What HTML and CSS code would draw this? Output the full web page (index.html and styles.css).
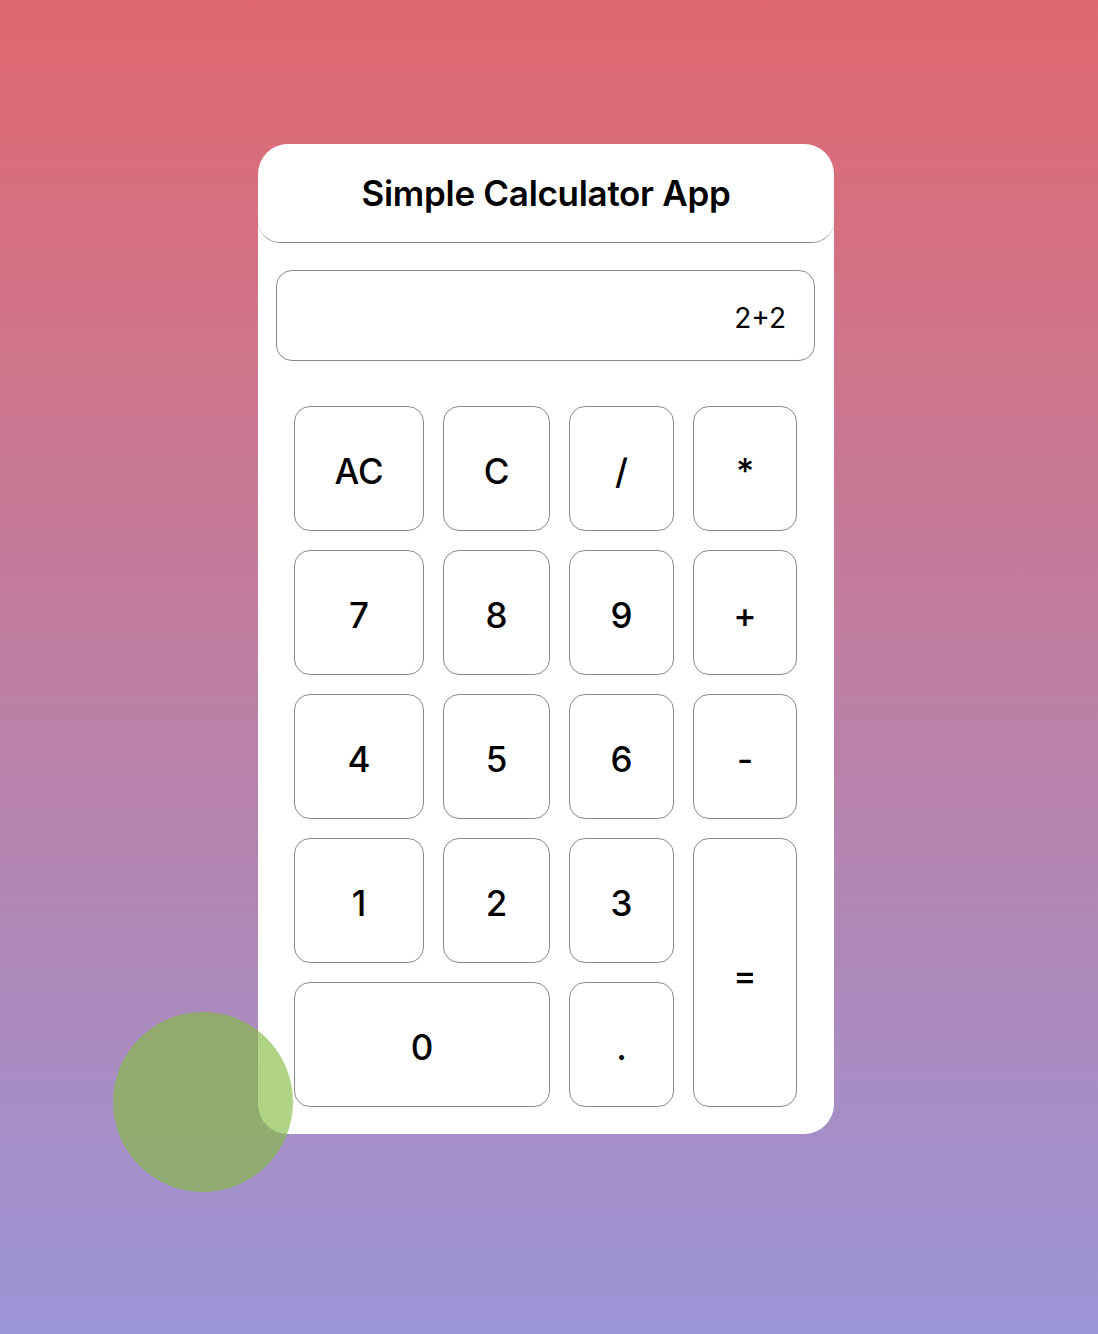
FILE: index.html
```html
<!DOCTYPE html>
<html lang="en">
<head>
<meta charset="utf-8">
<title>Simple Calculator App</title>
<link rel="stylesheet" href="styles.css">
</head>
<body>
<div class="page">
  <div class="calculator">
    <header class="calc-header">
      <h1 class="calc-title">Simple Calculator App</h1>
    </header>
    <div class="display">2+2</div>
    <div class="keys">
      <button class="key">AC</button>
      <button class="key">C</button>
      <button class="key">/</button>
      <button class="key">*</button>
      <button class="key">7</button>
      <button class="key">8</button>
      <button class="key">9</button>
      <button class="key">+</button>
      <button class="key">4</button>
      <button class="key">5</button>
      <button class="key">6</button>
      <button class="key">-</button>
      <button class="key">1</button>
      <button class="key">2</button>
      <button class="key">3</button>
      <button class="key key-equals">=</button>
      <button class="key key-zero">0</button>
      <button class="key">.</button>
    </div>
  </div>
  <div class="blob"></div>
</div>
</body>
</html>
```

FILE: styles.css
```css
* { box-sizing: border-box; }

html, body {
  margin: 0;
  padding: 0;
}

body {
  min-height: 1334px;
  background: linear-gradient(#e1686f, #9b95d7);
  font-family: Inter, "Noto Sans", "Liberation Sans", sans-serif;
  color: #000;
}

.page {
  position: relative;
  min-height: 1334px;
  padding: 144px 0 0 258px;
}

.calculator {
  width: 576px;
  background: #fff;
  border-radius: 30px;
  padding-bottom: 27px;
}

.calc-header {
  height: 99px;
  display: flex;
  align-items: center;
  justify-content: center;
  border-bottom: 1px solid #8a8a8a;
  border-radius: 30px 30px 22px 22px;
}

.calc-title {
  margin: 0;
  font-size: 35px;
  font-weight: 600;
  letter-spacing: -0.3px;
}

.display {
  margin: 27px 19px 0 18px;
  height: 91px;
  border: 1px solid #8a8a8a;
  border-radius: 16px;
  display: flex;
  align-items: center;
  justify-content: flex-end;
  padding: 4px 28px 0 0;
  font-size: 28px;
}

.keys {
  margin: 45px 0 0 36px;
  display: grid;
  grid-template-columns: 130px 107px 105px 104px;
  grid-auto-rows: 125px;
  gap: 19px;
}

.key {
  border: 1px solid #8a8a8a;
  border-radius: 16px;
  background: #fff;
  font-family: Inter, "Noto Sans", "Liberation Sans", sans-serif;
  font-size: 35px;
  font-weight: 500;
  color: #000;
  padding: 4px 0 0;
}

.key-equals {
  grid-column: 4;
  grid-row: 4 / span 2;
}

.key-zero {
  grid-column: 1 / span 2;
}

.blob {
  position: absolute;
  left: 113px;
  top: 1012px;
  width: 180px;
  height: 180px;
  border-radius: 50%;
  background: rgba(134, 188, 68, 0.65);
}
```
